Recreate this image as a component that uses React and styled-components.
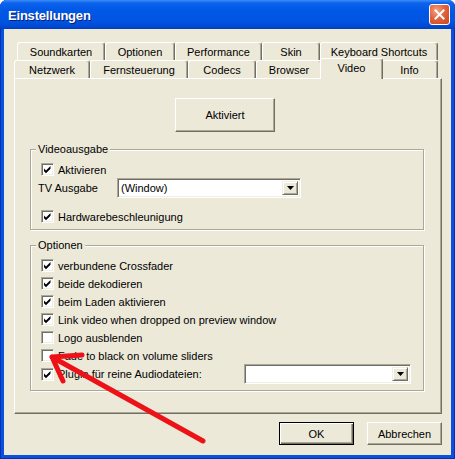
import React from "react";
import styled, { createGlobalStyle, css } from "styled-components";

const GlobalStyle = createGlobalStyle`
  html, body { margin: 0; padding: 0; background: #ffffff; }
  body { font-family: "Liberation Sans", Arial, sans-serif; font-size: 11px; }
  #root { width: 455px; height: 459px; }
`;

const Window = styled.div`
  position: relative;
  width: 455px;
  height: 459px;
  display: flex;
  flex-direction: column;
  background: #0a4fdd;
  box-shadow: inset 1px 0 0 #0031b0, inset -1px 0 0 #0031b0, inset 0 -1px 0 #0031b0;
  border-radius: 7px 7px 0 0;
  overflow: hidden;
  font-family: "Liberation Sans", Arial, sans-serif;
  font-size: 11px;
  color: #000;
`;

const TitleBar = styled.div`
  flex: none;
  height: 29px;
  display: flex;
  align-items: center;
  justify-content: space-between;
  padding: 0 5px 0 8px;
  background: linear-gradient(
    180deg,
    #3d8ef7 0%,
    #0d63ec 10%,
    #0058e6 35%,
    #0055e2 70%,
    #004cd6 88%,
    #003fc0 100%
  );
`;

const Title = styled.span`
  color: #fff;
  font-weight: bold;
  font-size: 13px;
  letter-spacing: -0.2px;
  text-shadow: 1px 1px 0 #0a1f7a;
  padding-top: 1px;
`;

const CloseButton = styled.div`
  width: 21px;
  height: 21px;
  box-sizing: border-box;
  border: 1px solid #fff;
  border-radius: 3px;
  background: radial-gradient(circle at 35% 30%, #f3a383 0%, #e2633c 45%, #c8451f 100%);
  display: flex;
  align-items: center;
  justify-content: center;
`;

const Client = styled.div`
  flex: 1;
  margin: 0 4px 4px;
  background: #ece9d8;
  display: flex;
  flex-direction: column;
  padding: 13px 9px 0 10px;
`;

const TabRow = styled.div`
  display: flex;
  height: 18px;
  align-items: flex-start;
  padding-left: ${(p) => p.$indent || 0}px;
`;

const Tab = styled.div`
  position: relative;
  box-sizing: border-box;
  flex: none;
  width: ${(p) => p.$w}px;
  height: 18px;
  display: flex;
  align-items: center;
  justify-content: center;
  background: #ece9d8;
  border-top: 1px solid #fff;
  border-left: 1px solid #fff;
  border-right: 1px solid #716f64;
  box-shadow: inset -1px 0 0 #aca899;
  border-radius: 3px 3px 0 0;
  white-space: nowrap;
  ${(p) =>
    p.$selected &&
    css`
      width: ${p.$w + 4}px;
      height: 21px;
      margin: -2px -2px 0;
      padding-bottom: 3px;
      z-index: 1;
    `}
`;

const Panel = styled.div`
  box-sizing: border-box;
  height: 336px;
  border: 1px solid;
  border-color: #fff #716f64 #716f64 #fff;
  box-shadow: inset -1px -1px 0 #aca899;
  padding: 19px 17px 0 15px;
  display: flex;
  flex-direction: column;
  align-items: flex-start;
`;

const Button = styled.div`
  box-sizing: border-box;
  width: ${(p) => p.$w}px;
  height: ${(p) => p.$h}px;
  margin-left: ${(p) => p.$ml || 0}px;
  display: flex;
  align-items: center;
  justify-content: center;
  background: #ece9d8;
  border: 1px solid;
  border-color: #fff #716f64 #716f64 #fff;
  box-shadow: inset -1px -1px 0 #aca899;
  ${(p) =>
    p.$default &&
    css`
      border: 1px solid #000;
      box-shadow: inset 1px 1px 0 #fff, inset -1px -1px 0 #716f64, inset -2px -2px 0 #aca899;
    `}
`;

const Group = styled.div`
  position: relative;
  box-sizing: border-box;
  width: 394px;
  height: ${(p) => p.$h}px;
  margin-top: ${(p) => p.$mt}px;
  border: 1px solid #aca899;
  box-shadow: 1px 1px 0 #fff, inset 1px 1px 0 #fff;
  display: flex;
  flex-direction: column;
  gap: ${(p) => p.$gap || 0}px;
  padding: 13px 12px 0 10px;
`;

const GroupLabel = styled.span`
  position: absolute;
  top: -7px;
  left: 5px;
  padding: 0 2px;
  line-height: 13px;
  background: #ece9d8;
`;

const Row = styled.div`
  display: flex;
  align-items: center;
  height: ${(p) => p.$h || 13}px;
  margin-top: ${(p) => p.$mt || 0}px;
  white-space: nowrap;
`;

const Box = styled.span`
  box-sizing: border-box;
  flex: none;
  width: 13px;
  height: 13px;
  margin-right: 4px;
  border: 1px solid;
  border-color: #aca899 #fff #fff #aca899;
  box-shadow: inset 1px 1px 0 #716f64, inset -1px -1px 0 #f1efe2;
  background: #fff;
  display: flex;
`;

const Label = styled.span`
  flex: none;
  width: ${(p) => (p.$w ? `${p.$w}px` : "auto")};
  margin-left: ${(p) => p.$ml || 0}px;
`;

const Combo = styled.div`
  box-sizing: border-box;
  flex: none;
  width: ${(p) => p.$w}px;
  height: 20px;
  margin-left: ${(p) => (p.$auto ? "auto" : "0")};
  display: flex;
  border: 1px solid;
  border-color: #aca899 #fff #fff #aca899;
  box-shadow: inset 1px 1px 0 #716f64, inset -1px -1px 0 #f1efe2;
  background: #fff;
  padding: 2px;
`;

const ComboText = styled.span`
  flex: 1;
  display: flex;
  align-items: center;
  padding-left: 1px;
`;

const ComboButton = styled.div`
  box-sizing: border-box;
  width: 16px;
  flex: none;
  background: #ece9d8;
  border: 1px solid;
  border-color: #f1efe2 #716f64 #716f64 #f1efe2;
  box-shadow: inset 1px 1px 0 #fff, inset -1px -1px 0 #aca899;
  display: flex;
  align-items: center;
  justify-content: center;
`;

const FooterRow = styled.div`
  display: flex;
  justify-content: flex-end;
  gap: 13px;
  margin-top: 8px;
`;

const Overlay = styled.svg`
  position: absolute;
  left: 0;
  top: 0;
  pointer-events: none;
  z-index: 10;
`;

const Check = () => (
  <svg width="11" height="11" viewBox="0 0 11 11">
    <polygon points="2,4.5 4,6.5 8.5,2 8.5,4.8 4,9.3 2,7.3" fill="#000" />
  </svg>
);

const CheckBox = ({ checked, children }) => (
  <>
    <Box>{checked && <Check />}</Box>
    <Label>{children}</Label>
  </>
);

const Arrow = () => (
  <svg width="7" height="4" viewBox="0 0 7 4">
    <polygon points="0,0 7,0 3.5,4" fill="#000" />
  </svg>
);

const Dropdown = ({ w, auto, text }) => (
  <Combo $w={w} $auto={auto}>
    <ComboText>{text}</ComboText>
    <ComboButton>
      <Arrow />
    </ComboButton>
  </Combo>
);

const row1 = [
  ["Soundkarten", 88],
  ["Optionen", 70],
  ["Performance", 87],
  ["Skin", 58],
  ["Keyboard Shortcuts", 118],
];
const row2 = [
  ["Netzwerk", 76],
  ["Fernsteuerung", 98],
  ["Codecs", 68],
  ["Browser", 66],
  ["Video", 59, true],
  ["Info", 57],
];

const options = [
  ["verbundene Crossfader", true],
  ["beide dekodieren", true],
  ["beim Laden aktivieren", true],
  ["Link video when dropped on preview window", true],
  ["Logo ausblenden", false],
  ["Fade to black on volume sliders", false],
];

export default function App() {
  return (
    <>
      <GlobalStyle />
      <Window>
        <TitleBar>
          <Title>Einstellungen</Title>
          <CloseButton>
            <svg width="11" height="11" viewBox="0 0 11 11">
              <path d="M1.5 1.5 L9.5 9.5 M9.5 1.5 L1.5 9.5" stroke="#fff" strokeWidth="2" strokeLinecap="square" />
            </svg>
          </CloseButton>
        </TitleBar>
        <Client>
          <TabRow $indent={3}>
            {row1.map(([t, w]) => (
              <Tab key={t} $w={w}>
                {t}
              </Tab>
            ))}
          </TabRow>
          <TabRow>
            {row2.map(([t, w, s]) => (
              <Tab key={t} $w={w} $selected={s}>
                {t}
              </Tab>
            ))}
          </TabRow>
          <Panel>
            <Button $w={100} $h={34} $ml={145}>
              Aktiviert
            </Button>
            <Group $h={81} $mt={17}>
              <GroupLabel>Videoausgabe</GroupLabel>
              <Row>
                <CheckBox checked>Aktivieren</CheckBox>
              </Row>
              <Row $h={20} $mt={2}>
                <Label $w={79} $ml={-3}>
                  TV Ausgabe
                </Label>
                <Dropdown w={184} text="(Window)" />
              </Row>
              <Row $mt={12}>
                <CheckBox checked>Hardwarebeschleunigung</CheckBox>
              </Row>
            </Group>
            <Group $h={146} $mt={15} $gap={5}>
              <GroupLabel>Optionen</GroupLabel>
              {options.map(([t, c]) => (
                <Row key={t}>
                  <CheckBox checked={c}>{t}</CheckBox>
                </Row>
              ))}
              <Row $h={20} $mt={-3}>
                <CheckBox checked>Plugin für reine Audiodateien:</CheckBox>
                <Dropdown w={167} auto text="" />
              </Row>
            </Group>
          </Panel>
          <FooterRow>
            <Button $w={75} $h={23} $default>
              OK
            </Button>
            <Button $w={75} $h={23}>
              Abbrechen
            </Button>
          </FooterRow>
        </Client>
        <Overlay width="455" height="459" viewBox="0 0 455 459">
          <path
            d="M203 441 L52 357 M52 357 L82 355 M52 357 L63 381"
            stroke="#ec1218"
            strokeWidth="5"
            strokeLinecap="round"
            strokeLinejoin="round"
            fill="none"
          />
        </Overlay>
      </Window>
    </>
  );
}
